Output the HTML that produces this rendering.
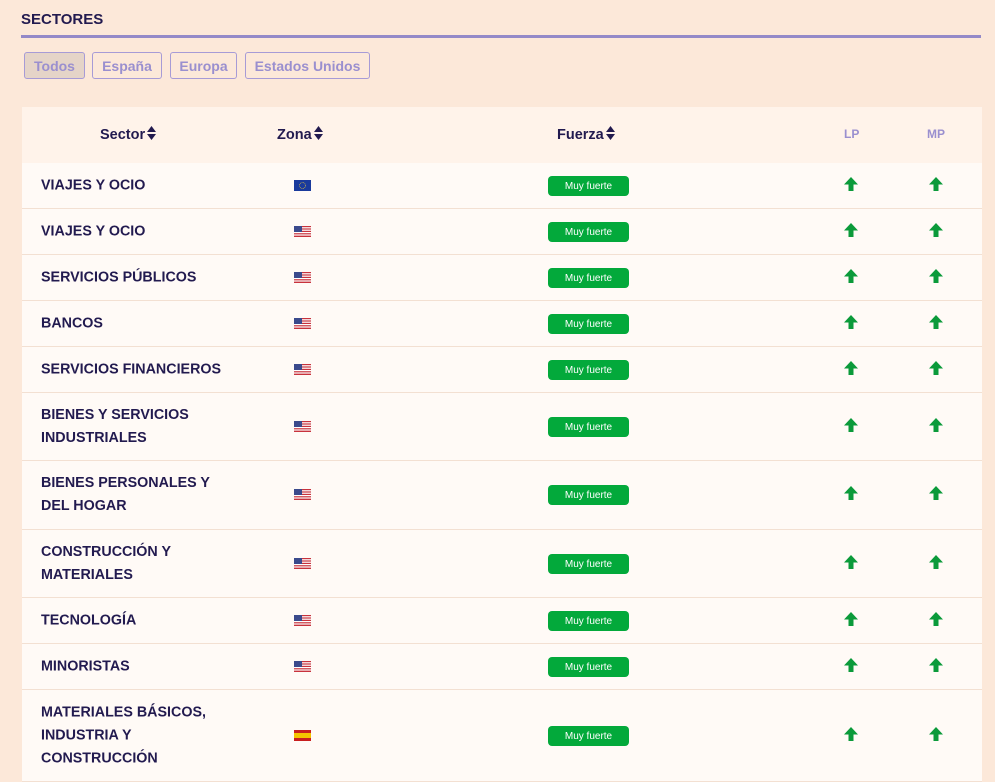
<!DOCTYPE html>
<html><head><meta charset="utf-8"><style>
body{margin:0;background:#fce8d9;font-family:"Liberation Sans",sans-serif;width:995px;height:775px;overflow:hidden;position:relative;color:#221a4f}
.title{position:absolute;left:21px;top:11px;font-weight:bold;font-size:15px}
.line{position:absolute;left:21px;top:35px;width:960px;height:3px;background:#9489c8}
.btn{position:absolute;top:52px;height:27px;box-sizing:border-box;border:1px solid #a79bd6;border-radius:3px;color:#9a8fcf;font-weight:bold;font-size:14px;line-height:26px;text-align:center}
.tbl{position:absolute;left:22px;top:107px;width:960px;background:#fffaf6}
.hd{height:56px;background:#fff3ea;position:relative;font-weight:bold;font-size:14.5px}
.hd>span{position:absolute;top:19px}
.row{position:relative;border-bottom:1px solid #f3e0d2;box-sizing:border-box}
.row .s{position:absolute;left:19px;font-weight:bold;font-size:14.3px;line-height:23px;top:50%;transform:translateY(-50%)}
.flag{position:absolute;left:272px;top:50%;margin-top:-6px;width:17px;height:11px}
.b{position:absolute;left:526px;top:50%;margin-top:-10px;width:81px;height:20px;background:#03a93b;border-radius:4px;color:#fff;font-size:10px;line-height:22px;text-align:center}
.ar{position:absolute;top:50%;margin-top:-10px}
.sort{display:inline-block;vertical-align:-1px;margin-left:2px}
</style></head><body>
<div class="title">SECTORES</div><div class="line"></div>
<div class="btn" style="left:24px;width:61px;background:#e5d4c8">Todos</div>
<div class="btn" style="left:92px;width:70px">España</div>
<div class="btn" style="left:170px;width:67px">Europa</div>
<div class="btn" style="left:245px;width:125px">Estados Unidos</div>
<div class="tbl">
<div class="hd"><span style="left:78px">Sector<svg class="sort" width="9" height="14" viewBox="0 0 9 14"><path d="M4.5 0L9 6H0zM4.5 14L0 8h9z" fill="#221a4f"/></svg></span><span style="left:255px">Zona<svg class="sort" width="9" height="14" viewBox="0 0 9 14"><path d="M4.5 0L9 6H0zM4.5 14L0 8h9z" fill="#221a4f"/></svg></span><span style="left:535px">Fuerza<svg class="sort" width="9" height="14" viewBox="0 0 9 14"><path d="M4.5 0L9 6H0zM4.5 14L0 8h9z" fill="#221a4f"/></svg></span><span style="left:822px;top:20px;font-size:12px;color:#9a8fcf">LP</span><span style="left:905px;top:20px;font-size:12px;color:#9a8fcf">MP</span></div>
<div id="rows"></div>
</div>
<script>
var d=[["VIAJES Y OCIO","eu",46],["VIAJES Y OCIO","us",46],["SERVICIOS PÚBLICOS","us",46],["BANCOS","us",46],["SERVICIOS FINANCIEROS","us",46],["BIENES Y SERVICIOS<br>INDUSTRIALES","us",68],["BIENES PERSONALES Y<br>DEL HOGAR","us",69],["CONSTRUCCIÓN Y<br>MATERIALES","us",68],["TECNOLOGÍA","us",46],["MINORISTAS","us",46],["MATERIALES BÁSICOS,<br>INDUSTRIA Y<br>CONSTRUCCIÓN","es",92]];
var f={eu:'<svg class="flag" viewBox="0 0 17 11"><rect width="17" height="11" fill="#1a3a9c"/><circle cx="8.5" cy="5.5" r="3" fill="none" stroke="#c9b24a" stroke-width=".7" stroke-dasharray="1 .6"/></svg>',
us:'<svg class="flag" viewBox="0 0 17 11"><rect width="17" height="11" fill="#fff"/><g fill="#c8323c"><rect y="0" width="17" height="1.2"/><rect y="2.4" width="17" height="1.2"/><rect y="4.8" width="17" height="1.2"/><rect y="7.2" width="17" height="1.2"/><rect y="9.6" width="17" height="1.4"/></g><rect width="8" height="6" fill="#3b4a8c"/></svg>',
es:'<svg class="flag" viewBox="0 0 17 11"><rect width="17" height="11" fill="#c81e1e"/><rect y="3" width="17" height="5" fill="#f4c400"/></svg>'};
var a='<svg viewBox="0 0 16 16" width="16" height="16"><path d="M8 1L1 8.5h4.5V15h5V8.5H15z" fill="#0b9a3a"/></svg>';
var h='';d.forEach(function(r){h+='<div class="row" style="height:'+r[2]+'px"><div class="s">'+r[0]+'</div>'+f[r[1]]+'<div class="b">Muy fuerte</div><div class="ar" style="left:821px">'+a+'</div><div class="ar" style="left:906px">'+a+'</div></div>'});
document.getElementById('rows').innerHTML=h;
</script>
</body></html>
